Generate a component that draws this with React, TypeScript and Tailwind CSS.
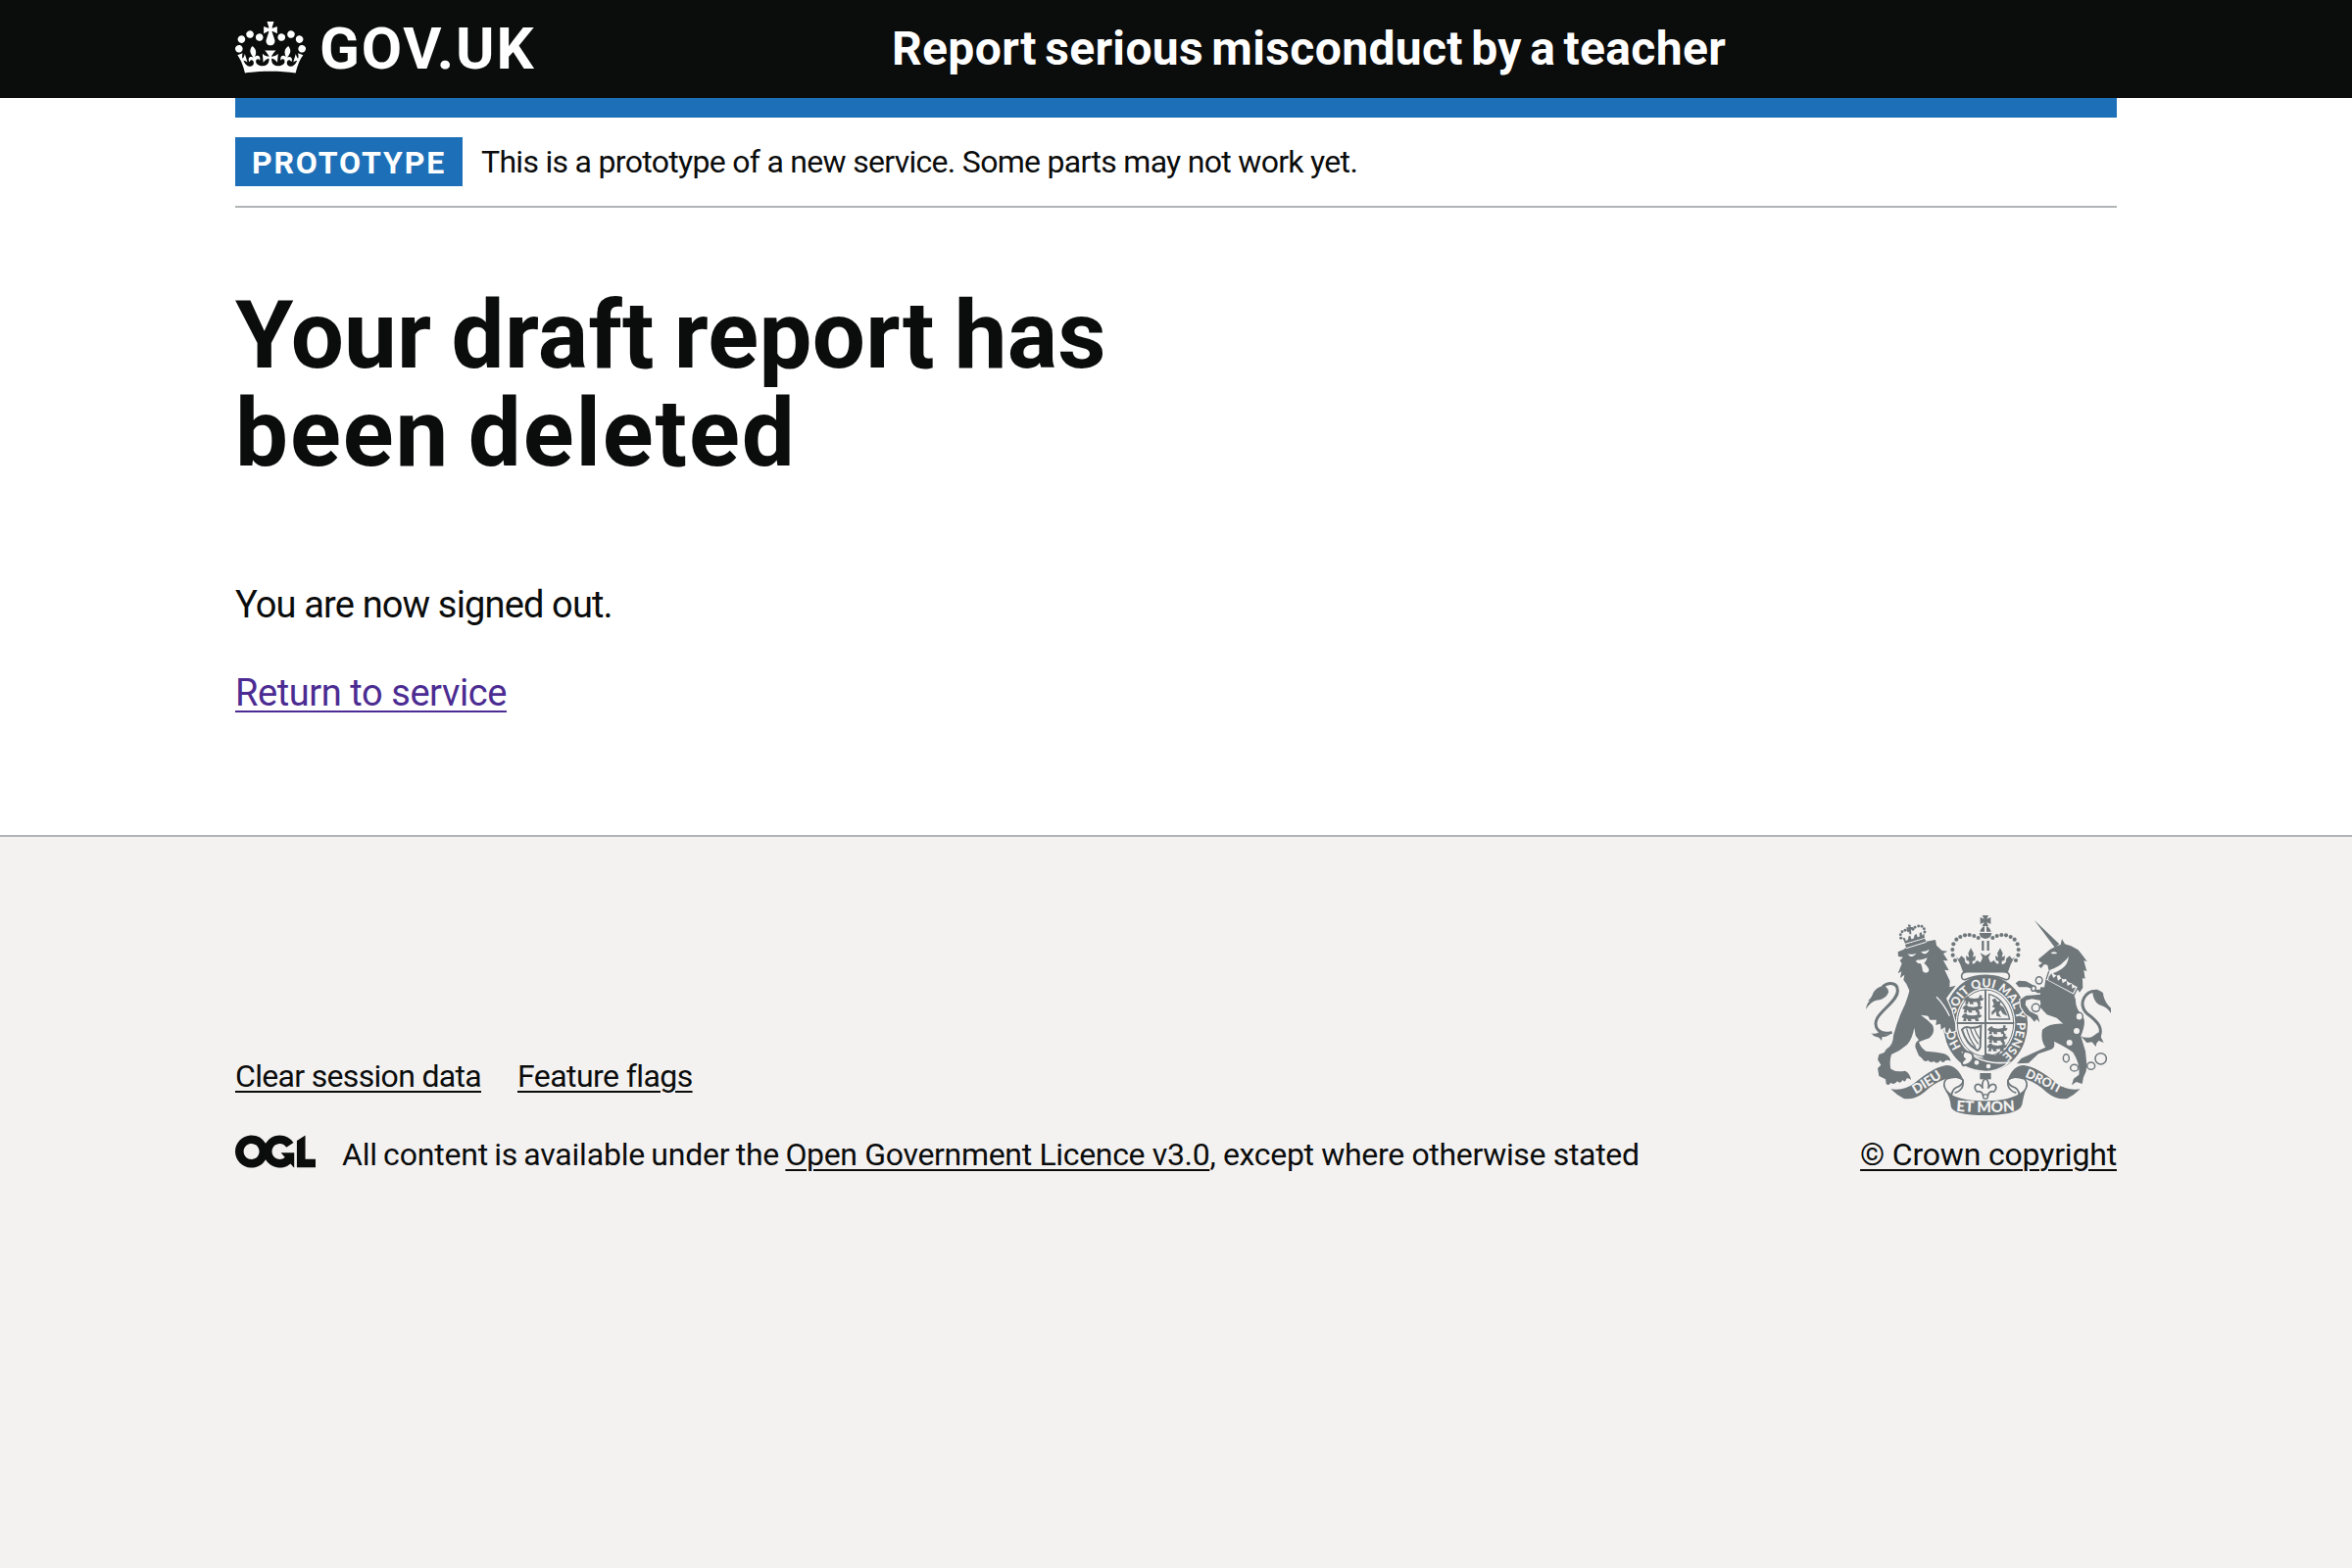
import React from "react";

const archBeads: [number, number][] = [
  [345, 180], [338, 164], [337, 147], [340, 130], [349, 116], [361, 108], [375, 103], [389, 102], [403, 105], [416, 111],
];

const lionCrownBeads: [number, number][] = [
  [179, 112], [178, 101], [183, 92], [192, 88], [202, 89], [216, 85], [222, 79], [233, 75], [243, 76], [250, 83], [252, 93],
];

const GREY = "#6f777b";
const PAPER = "#f3f2f1";

function CrownIcon() {
  return (
    <svg aria-hidden="true" viewBox="0 0 132 97" className="h-[53px] w-[72px] shrink-0" fill="currentColor">
      <path
        fillRule="evenodd"
        d="M25 30.2c3.5 1.5 7.7-.2 9.1-3.7 1.5-3.6-.2-7.8-3.9-9.2-3.6-1.4-7.6.3-9.1 3.9-1.4 3.5.3 7.5 3.9 9zM9 39.5c3.6 1.5 7.8-.2 9.2-3.7 1.5-3.6-.2-7.8-3.9-9.1-3.6-1.5-7.6.2-9.1 3.8-1.4 3.5.3 7.5 3.8 9zM4.4 57.2c3.5 1.5 7.7-.2 9.1-3.8 1.5-3.6-.2-7.7-3.9-9.1-3.5-1.5-7.6.3-9.1 3.8-1.4 3.5.3 7.6 3.9 9.1zm38.3-21.4c3.5 1.5 7.7-.2 9.1-3.8 1.5-3.6-.2-7.7-3.9-9.1-3.6-1.5-7.6.3-9.1 3.8-1.3 3.6.4 7.7 3.9 9.1zm64.4-5.6c-3.6 1.5-7.8-.2-9.1-3.7-1.5-3.6.2-7.8 3.8-9.2 3.6-1.4 7.7.3 9.2 3.9 1.3 3.5-.4 7.5-3.9 9zm15.9 9.3c-3.6 1.5-7.7-.2-9.1-3.7-1.5-3.6.2-7.8 3.7-9.1 3.6-1.5 7.7.2 9.2 3.8 1.5 3.5-.3 7.5-3.8 9zm4.7 17.7c-3.6 1.5-7.8-.2-9.2-3.8-1.5-3.6.2-7.7 3.9-9.1 3.6-1.5 7.7.3 9.2 3.8 1.3 3.5-.4 7.6-3.9 9.1zM89.3 35.8c-3.6 1.5-7.8-.2-9.2-3.8-1.4-3.6.2-7.7 3.9-9.1 3.6-1.5 7.7.3 9.2 3.8 1.4 3.6-.3 7.7-3.9 9.1zM69.7 17.7l8.9 4.7V9.3l-8.9 2.8c-.2-.3-.5-.6-.9-.9L72.4 0H59.6l3.5 11.2c-.3.3-.6.5-.9.9l-8.8-2.8v13.1l8.8-4.7c.3.3.6.7.9.9l-5 15.4v.1c-.2.8-.4 1.6-.4 2.4 0 4.1 3.1 7.5 7 8.1h.2c.3 0 .7.1 1 .1.4 0 .7 0 1-.1h.2c4-.6 7.1-4.1 7.1-8.1 0-.8-.1-1.7-.4-2.4V34l-5.1-15.4c.4-.2.7-.6 1-.9zM66 92.8c16.9 0 32.8 1.1 47.1 3.2 4-16.9 8.9-26.7 14-33.5l-9.6-3.4c1 4.9 1.1 7.2 0 10.2-1.5-1.4-3-4.3-4.2-8.7L108.6 76c2.8-2 5-3.2 7.5-3.3-4.4 9.4-10 11.9-13.6 11.2-4.3-.8-6.3-4.6-5.6-7.9 1-4.7 5.7-5.9 8-.5 4.3-8.7-3-11.4-7.6-8.8 7.1-7.2 7.9-13.5 2.1-21.1-8 6.1-8.1 12.3-4.5 20.8-4.7-5.4-12.1-2.5-9.5 6.2 3.4-5.2 7.9-2 7.2 3.1-.6 4.3-6.4 7.8-13.5 7.2-10.3-.9-10.9-8-11.2-13.8 2.5-.5 7.1 1.8 11 7.3L80.2 60c-4.1 4.4-8 5.3-12.3 5.4 1.4-4.4 8-11.6 8-11.6H55.5s6.4 7.2 7.9 11.6c-4.2-.1-8-1-12.3-5.4l1.4 16.4c3.9-5.5 8.5-7.7 10.9-7.3-.3 5.8-.9 12.8-11.1 13.8-7.2.6-12.9-2.9-13.5-7.2-.7-5 3.8-8.3 7.1-3.1 2.7-8.7-4.6-11.6-9.4-6.2 3.7-8.5 3.6-14.7-4.6-20.8-5.8 7.6-5 13.9 2.2 21.1-4.7-2.6-11.9.1-7.7 8.8 2.3-5.5 7.1-4.2 8.1.5.7 3.3-1.3 7.1-5.7 7.9-3.5.7-9-1.8-13.5-11.2 2.5.1 4.7 1.3 7.5 3.3l-4.7-15.4c-1.2 4.4-2.7 7.2-4.3 8.7-1.1-3-.9-5.3 0-10.2l-9.5 3.4c5 6.9 9.9 16.7 14 33.5 14.8-2.1 30.8-3.2 47.7-3.2z"
      />
    </svg>
  );
}

function OglLogo() {
  return (
    <svg aria-hidden="true" viewBox="0 0 483.2 195.7" className="h-[34px] w-[82px] shrink-0" fill="currentColor">
      <path d="M421.5 142.8V.1l-50.7 32.3v161.1h112.4v-50.7zm-122.3-9.6A47.12 47.12 0 0 1 221 97.8c0-26 21.1-47.1 47.1-47.1 16.7 0 31.4 8.7 39.7 21.8l42.7-27.2A97.63 97.63 0 0 0 268.1 0c-36.5 0-68.3 20.1-85.1 49.7A98 98 0 0 0 97.8 0C43.9 0 0 43.9 0 97.8s43.9 97.8 97.8 97.8c36.5 0 68.3-20.1 85.1-49.7a97.76 97.76 0 0 0 149.6 25.4l19.4 22.2h3v-87.8h-80l24.3 27.5zM97.8 145c-26 0-47.1-21.1-47.1-47.1s21.1-47.1 47.1-47.1 47.1 21.1 47.1 47.1S123.8 145 97.8 145" />
    </svg>
  );
}

function Lion() {
  return (
    <g>
      {/* crown */}
      <path d="M192 132L252 114L256 122L196 141Z" />
      <path d="M192 128L184 110L192 112L194 120L200 118L203 106L208 104L211 115L218 113L221 102L227 99L230 109L236 107L236 96L242 94L245 104L250 96L252 111Z" />
      {lionCrownBeads.map(([x, y]) => (
        <circle key={`${x}-${y}`} cx={x} cy={y} r="4.4" />
      ))}
      <path d="M200 70L210 72L208 78L216 78L215 87L210 85L211 100L205 100L204 86L197 88L196 79L203 79Z" />
      {/* head, mane and body */}
      <path
        stroke={PAPER}
        strokeWidth="7"
        paintOrder="stroke"
        d="M170 154L188 146L197 139L256 122L285 117L288 134L305 150L322 152L309 159L323 181L309 180L326 211L313 209L329 243L328 262L347 257L330 280L318 296L334 332L345 372L346 396L334 399L328 386L322 402L316 400L314 384L302 392L300 374L286 378L288 362L268 362L262 350L240 347Q262 362 276 378Q286 400 266 418Q248 424 234 430Q240 448 256 458Q290 460 312 466Q328 472 332 488Q324 484 316 486Q308 498 300 486Q290 500 280 488Q272 496 262 486Q250 494 244 480L234 472L224 448Q220 432 234 424L224 410L220 386Q214 420 198 438Q178 456 150 468Q143 490 148 512Q166 524 192 518Q208 526 210 546Q202 538 196 542Q192 556 184 546Q178 560 168 550Q158 564 148 554Q142 566 134 558L132 544L112 534L108 510L118 500L108 484L112 468L128 462L134 452Q156 440 156 410Q164 380 178 344Q198 306 205 272L196 252L187 240L190 224L177 234L181 214L170 220L182 190L176 180L186 170L171 168Z"
      />
      <path d="M192 132L252 114L256 122L196 141Z" />
      <path d="M195 143L257 124" stroke={PAPER} strokeWidth="3" />
      <g fill={PAPER}>
        <path d="M198 160Q212 164 226 158Q220 168 208 168Z" />
        <path d="M240 153Q256 154 266 146Q262 160 248 160Z" />
        <path d="M224 176Q240 182 260 172Q256 184 250 188Q268 204 264 214Q256 222 246 214Q244 198 240 190Q230 190 224 182L232 178Z" />
      </g>
      <path d="M288 292Q312 316 328 350" stroke={PAPER} strokeWidth="4" fill="none" />
      {/* tail */}
      <path d="M152 400C112 412 94 384 106 358C120 330 168 304 169 274C170 248 142 244 122 262" stroke={GREY} strokeWidth="9" fill="none" />
      <path d="M124 258Q142 262 141 278Q132 300 104 302Q84 308 72 330Q74 312 84 304L78 304Q90 294 94 280Q104 262 124 258Z" />
      <path d="M88 402Q98 408 112 400Q126 410 148 404Q138 414 122 414L120 426Q112 414 104 414Q94 412 88 402Z" />
    </g>
  );
}

function Unicorn() {
  return (
    <g>
      <path d="M587 56L664 130L650 140Z" />
      {/* head and mane */}
      <path d="M672 114L681 130L700 136L722 148L736 166L749 183L739 181L748 213L739 210L743 236L735 234L736 264L726 278L716 262L708 264L702 250L690 250L684 236L672 240L664 224L650 230L644 214L632 212L628 194L618 192L608 204L600 196L612 188L602 182L600 176L620 160L636 146L656 136L668 132Z" />
      <path d="M692 168Q692 202 648 218Q636 218 634 210Q664 200 678 184Q688 176 692 168Z" fill={PAPER} />
      <path d="M638 158Q646 150 658 158Q650 162 638 158Z" fill={PAPER} />
      {/* coronet collar */}
      <path d="M632 214L720 262L708 286L624 240Z" fill={PAPER} />
      <path d="M624 238L632 214M720 264L708 288" stroke={GREY} strokeWidth="4" fill="none" />
      <path d="M632 230L640 220L646 234L656 226L660 242L671 234L674 250L686 242L689 258L702 251L703 266L714 262L706 280L630 240Z" />
      {/* body and legs */}
      <path d="M622 238L708 284L714 300Q712 326 736 352Q748 368 730 412L744 458L748 498L746 520L738 538L734 558L716 552L702 562L708 542L724 530Q728 496 706 462Q690 448 648 428Q652 446 640 452L600 466L570 494L534 496L548 480L582 464L622 446Q606 426 612 392Q634 372 676 374L656 356L626 346L604 322Q616 286 622 238Z" />
      <g stroke={PAPER} strokeWidth="7" paintOrder="stroke">
        <path d="M616 282L596 280L582 268L566 262L540 262L530 250L540 242L562 244L584 256L592 270L618 268Z" />
        <path d="M612 304L580 298L562 302L560 316L574 336L598 348L604 370L594 360L588 368L576 354L560 344L546 322L544 300L562 288L608 284Z" />
      </g>
      <path d="M606 262H630V310H606Z" />
      {/* tail */}
      <path d="M782 274C742 270 720 312 748 342C780 366 808 390 776 430" stroke={GREY} strokeWidth="9" fill="none" />
      <path d="M764 270Q788 268 798 280Q800 306 822 326L822 342Q812 324 792 318Q774 312 768 290Z" />
      <path d="M730 412Q746 420 764 414L784 400L800 432L780 424L776 444L764 430L748 432Z" />
      {/* chain */}
      <g fill={PAPER}>
        <circle cx="717" cy="396" r="9" />
        <circle cx="695" cy="432" r="9" />
      </g>
      <g fill={PAPER} stroke={GREY} strokeWidth="4.5">
        <ellipse cx="602" cy="241" rx="10" ry="11" />
        <ellipse cx="585" cy="266" rx="7" ry="8" />
        <ellipse cx="592" cy="325" rx="12" ry="12" />
        <ellipse cx="725" cy="352" rx="11" ry="12" />
        <ellipse cx="685" cy="479" rx="9" ry="12" />
        <ellipse cx="710" cy="509" rx="12" ry="10" />
        <ellipse cx="761" cy="503" rx="12" ry="11" />
        <circle cx="791" cy="481" r="17" />
      </g>
    </g>
  );
}

function PassantLion({ x, y }: { x: number; y: number }) {
  return (
    <path
      transform={`translate(${x} ${y})`}
      d="M2 2L10 -3L15 3L30 5L44 3L46 -6L54 -4L51 2L59 4L55 11L47 12L50 22L40 22L37 15L25 16L28 22L17 22L15 16L11 14L11 22L1 22L4 13L-3 9Z"
    />
  );
}

function ImperialCrown() {
  const half = (
    <g>
      {archBeads.map(([x, y]) => (
        <circle key={`${x}-${y}`} cx={x} cy={y} r="6.2" />
      ))}
      <path d="M393 142L402 158L399 170L408 166L406 180L398 182V196H388V182L380 180L378 166L388 170L385 158Z" />
      <path d="M348 168L356 176L364 166L374 174L376 186L384 192L404 190L412 180L422 186L440 186V218H370Q364 194 348 168Z" />
    </g>
  );
  return (
    <g>
      {half}
      <g transform="translate(876 0) scale(-1 1)">{half}</g>
      <path d="M422 157L438 166L454 157L447 172L454 188H422L429 172Z" />
      {/* orb and cross */}
      <path d="M428 42L447 42L442 53L454 48L454 69L442 63L447 75L428 75L434 63L422 69L422 48L434 53Z" />
      <path d="M421 92Q425 78 435 75V92ZM441 75Q451 78 455 92H441Z" />
      <path d="M419 96L457 96Q456 112 438 114Q420 112 419 96Z" />
      <path d="M430 120V150M446 120V150" stroke={GREY} strokeWidth="7" />
      {/* cushion */}
      <path
        d="M378 238Q364 242 365 226Q367 215 384 215H492Q509 215 511 226Q512 242 498 238Q438 214 378 238Z"
        fill={PAPER}
        stroke={GREY}
        strokeWidth="5"
      />
    </g>
  );
}

function Garter() {
  return (
    <g>
      <ellipse cx="438" cy="374" rx="129" ry="148" />
      <ellipse cx="438" cy="372" rx="91" ry="108" fill={PAPER} />
      <ellipse cx="438" cy="372" rx="86" ry="102" fill="none" stroke={GREY} strokeWidth="3" />
      {/* quartered shield */}
      <path d="M438 270V470M350 372H526" stroke={GREY} strokeWidth="6" />
      <PassantLion x={374} y={292} />
      <PassantLion x={370} y={318} />
      <PassantLion x={368} y={344} />
      <PassantLion x={447} y={384} />
      <PassantLion x={447} y={410} />
      <PassantLion x={445} y={436} />
      <path d="M449 284Q496 294 512 360H449Z" fill="none" stroke={GREY} strokeWidth="4" />
      <path d="M458 300L468 296L474 306L486 304L482 316L494 324L506 350L492 344L484 332L478 340L486 354L472 350L470 336L458 348L456 338L468 326L458 322L464 314Z" />
      <path d="M366 392Q376 380 390 386Q410 388 424 380L422 446Q416 462 406 450Q380 436 366 392Z" fill="none" stroke={GREY} strokeWidth="6" />
      <path d="M380 388Q388 420 408 446M392 388Q398 412 416 436M404 388Q408 402 420 420" stroke={GREY} strokeWidth="4" fill="none" />
      <path d="M428 474L440 464L468 470L484 458L472 486L436 484Z" />
      {/* motto */}
      <path id="garter-line" d="M438 487A95 112 0 0 1 438 262A95 112 0 0 1 438 487" fill="none" />
      <g className="font-['Lato'] text-[37px] font-black" fill={PAPER} textAnchor="middle">
        <text><textPath href="#garter-line" startOffset="18%">HO</textPath></text>
        <text><textPath href="#garter-line" startOffset="36%">SOIT</textPath></text>
        <text><textPath href="#garter-line" startOffset="49%">QUI</textPath></text>
        <text><textPath href="#garter-line" startOffset="62%">MAL</textPath></text>
        <text><textPath href="#garter-line" startOffset="71%">Y</textPath></text>
        <text><textPath href="#garter-line" startOffset="83%">PENSE</textPath></text>
      </g>
      {/* buckle and strap */}
      <path d="M368 462Q384 456 398 470Q440 500 510 492Q480 520 438 521Q400 518 372 504Q386 486 368 462Z" stroke={PAPER} strokeWidth="5" />
      <path d="M374 458Q402 460 400 480Q394 498 370 502Q360 494 374 482Q362 474 374 458Z" fill={PAPER} stroke={GREY} strokeWidth="6" />
      <circle cx="411" cy="493" r="7" fill={PAPER} />
      <circle cx="447" cy="504" r="7" fill={PAPER} />
    </g>
  );
}

function Scroll() {
  return (
    <g>
      {/* ribbon folds */}
      <g fill={PAPER} stroke={GREY} strokeWidth="5">
        <path d="M318 543C304 560 314 580 334 592Q338 570 356 566Q370 558 369 546C360 536 340 536 318 543Z" />
        <path d="M369 546Q374 576 344 586" fill="none" />
        <path d="M558 543C572 560 562 580 542 592Q538 570 520 566Q506 558 507 546C516 536 536 536 558 543Z" />
        <path d="M507 546Q502 576 532 586" fill="none" />
      </g>
      <path d="M148 574Q190 580 220 556Q280 506 318 501Q352 500 371 548Q344 532 314 544Q280 556 250 584Q220 608 188 603Q166 592 148 574Z" />
      <path d="M728 574Q686 580 656 556Q596 506 556 501Q522 500 505 548Q532 532 562 544Q596 556 626 584Q656 608 688 603Q710 592 728 574Z" />
      <path d="M314 578Q350 610 438 610Q526 610 562 572Q554 596 550 622Q540 654 438 654Q336 654 332 626Q330 596 314 578Z" />
      <path id="scroll-left" d="M212 597Q256 572 318 530" fill="none" />
      <path id="scroll-right" d="M550 532Q604 556 672 592" fill="none" />
      <path id="scroll-foot" d="M320 638Q438 652 556 638" fill="none" />
      <g className="font-['Lato'] font-black" fill={PAPER} textAnchor="middle">
        <text className="text-[41px]"><textPath href="#scroll-left" startOffset="50%">DIEU</textPath></text>
        <text className="text-[38px]"><textPath href="#scroll-right" startOffset="50%">DROIT</textPath></text>
        <text className="text-[46px]"><textPath href="#scroll-foot" startOffset="50%">ET MON</textPath></text>
      </g>
      {/* fleur-de-lis */}
      <path d="M421 525H455V544H421Z" />
      <path d="M438 540Q452 554 446 572Q454 556 466 560Q476 570 464 582Q456 578 448 586L444 600H432L428 586Q420 578 412 582Q400 570 410 560Q422 556 430 572Q424 554 438 540Z" fill={PAPER} stroke={GREY} strokeWidth="5" />
      <circle cx="438" cy="597" r="7" fill={PAPER} stroke={GREY} strokeWidth="4" />
    </g>
  );
}

function RoyalArms() {
  return (
    <svg aria-hidden="true" viewBox="72 42 750 612" className="h-[204px] w-[250px]" fill={GREY}>
      <Garter />
      <Lion />
      <Unicorn />
      <ImperialCrown />
      <Scroll />
    </svg>
  );
}

const link = "underline decoration-2 underline-offset-4";

export default function App() {
  return (
    <div className="flex min-h-[1600px] flex-col bg-white font-['Roboto',sans-serif] text-[#0b0c0c]">
      <header className="h-[100px] bg-[#0b0c0c] text-white">
        <div className="mx-auto flex h-full w-[1920px] items-center">
          <a className="flex h-full w-[670px] items-center gap-3">
            <span className="pb-1">
              <CrownIcon />
            </span>
            <span className="pl-0.5 text-[60px] leading-none font-bold tracking-[1.8px]">GOV.UK</span>
          </a>
          <a className="text-[48px] leading-[60px] font-bold tracking-[0.35px] whitespace-nowrap [word-spacing:-4px]">
            Report serious misconduct by a teacher
          </a>
        </div>
      </header>

      <div className="mx-auto w-[1920px]">
        <div className="h-5 bg-[#1d70b8]" />
        <div className="flex items-center gap-5 border-b-2 border-[#b1b4b6] py-5">
          <strong className="flex h-[50px] w-[232px] items-center justify-center bg-[#1d70b8] pt-0.5 text-[32px] leading-none font-bold tracking-[1.9px] text-white">
            PROTOTYPE
          </strong>
          <span className="-ml-px text-[32px] leading-10 tracking-[-0.7px]">
            This is a prototype of a new service. Some parts may not work yet.
          </span>
        </div>
        <main className="pt-20 pb-20">
          <h1 className="mb-[100px] text-[96px] leading-[100px] font-bold">
            <span className="block tracking-[0.25px] [word-spacing:-4px]">Your draft report has</span>
            <span className="block tracking-[1.9px] [word-spacing:-7px]">been deleted</span>
          </h1>
          <p className="mb-10 text-[38px] leading-[50px] tracking-[-0.85px]">You are now signed out.</p>
          <p className="mb-10 text-[38px] leading-[50px] tracking-[-0.42px]">
            <a className="text-[#4c2c92] underline decoration-2 underline-offset-[5px]">Return to service</a>
          </p>
        </main>
      </div>

      <footer className="flex-1 border-t-2 border-[#b1b4b6] bg-[#f3f2f1] pt-20 text-[32px] leading-10">
        <div className="mx-auto flex w-[1920px] items-end justify-between">
          <div className="flex flex-col gap-10">
            <ul className="flex gap-[37px]">
              <li>
                <a className={`${link} tracking-[-0.68px]`}>Clear session data</a>
              </li>
              <li>
                <a className={`${link} tracking-[-0.58px]`}>Feature flags</a>
              </li>
            </ul>
            <div className="flex items-start gap-[27px]">
              <OglLogo />
              <span className="whitespace-pre">
                <span className="tracking-[-0.2px] [word-spacing:-1.5px]">All content is available under the </span>
                <a className={`${link} tracking-[-0.33px]`}>Open Government Licence v3.0</a>
                <span className="tracking-[-0.33px]">, except where otherwise stated</span>
              </span>
            </div>
          </div>
          <div className="flex flex-col items-center gap-5">
            <RoyalArms />
            <a className={`${link} tracking-[-0.18px]`}>© Crown copyright</a>
          </div>
        </div>
      </footer>
    </div>
  );
}
